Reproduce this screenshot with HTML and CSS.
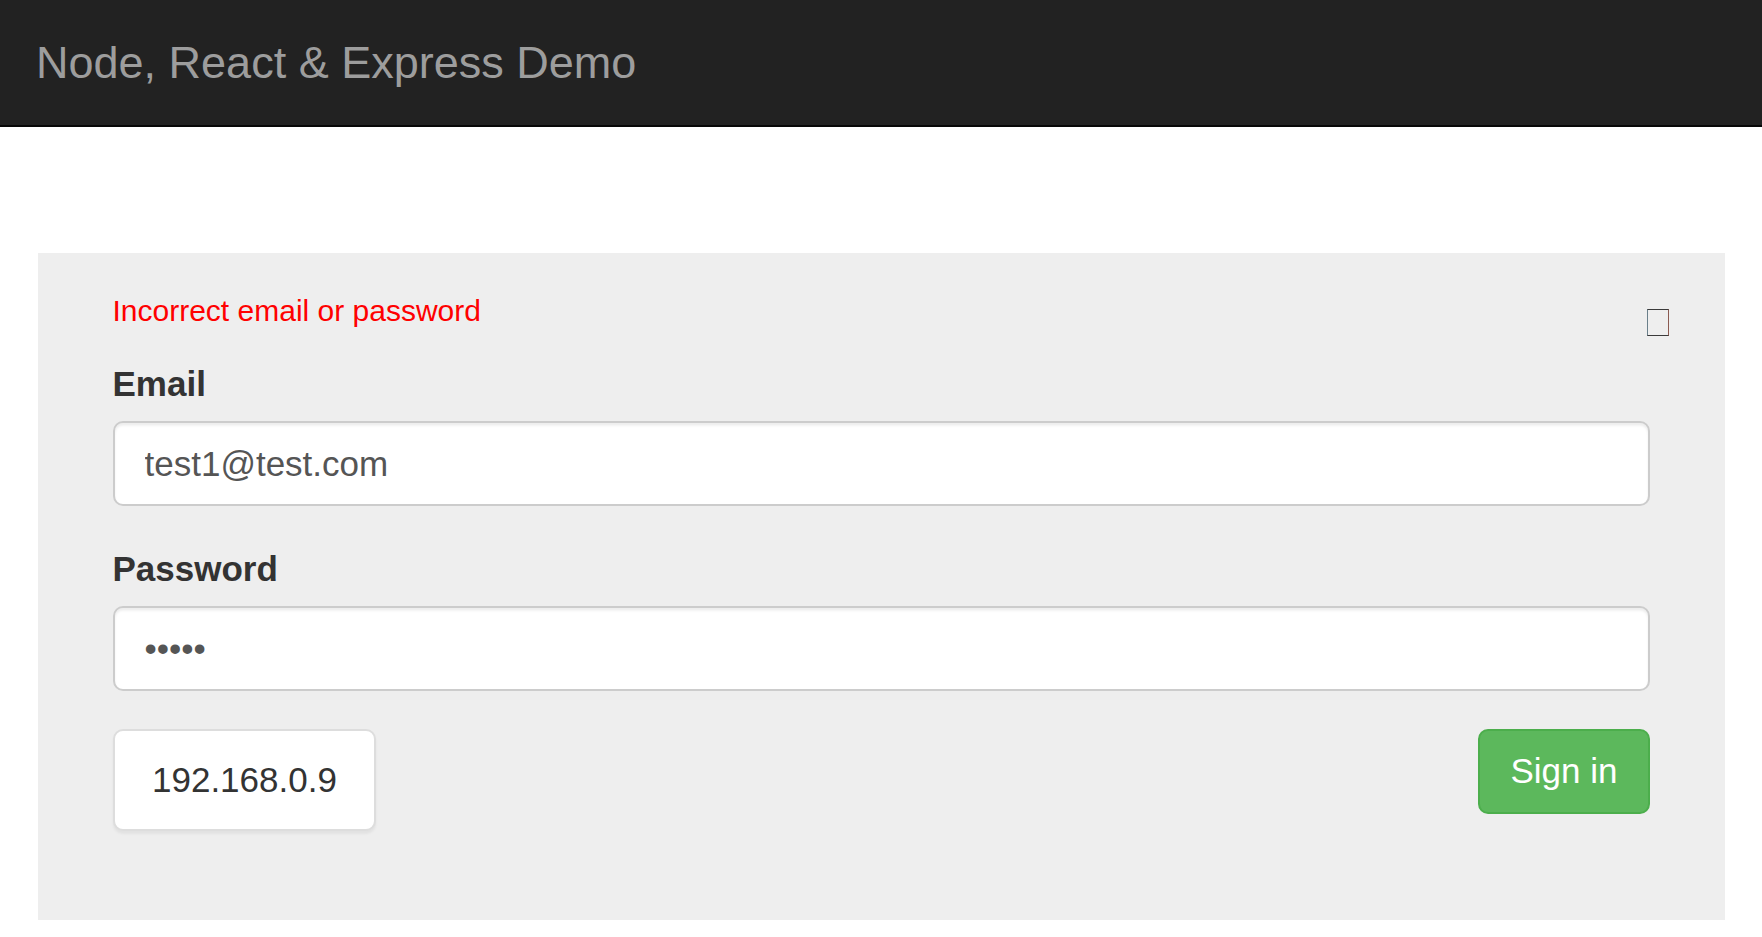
FILE: index.html
```html
<!DOCTYPE html>
<html lang="en">
<head>
<meta charset="utf-8">
<title>Node, React &amp; Express Demo</title>
<link rel="stylesheet" href="styles.css">
</head>
<body>
<header class="navbar">
  <span class="brand">Node, React &amp; Express Demo</span>
</header>
<main class="container">
  <section class="jumbotron">
    <div class="error-row">
      <div class="error">Incorrect email or password</div>
      <span class="glyph-missing"></span>
    </div>
    <form class="login-form">
      <div class="form-group">
        <label for="email">Email</label>
        <input id="email" class="form-control" type="email" value="test1@test.com">
      </div>
      <div class="form-group">
        <label for="password">Password</label>
        <input id="password" class="form-control" type="password" value="12345">
      </div>
      <div class="form-footer">
        <div class="ip-box">192.168.0.9</div>
        <button type="button" class="btn-success">Sign in</button>
      </div>
    </form>
  </section>
</main>
</body>
</html>
```
FILE: styles.css
```css
* { box-sizing: border-box; }
html, body { margin: 0; padding: 0; }
body {
  font-family: "Liberation Sans", Arial, Helvetica, sans-serif;
  font-size: 35px;
  line-height: 50px;
  color: #333;
  background: #fff;
}
.navbar {
  height: 127px;
  background: #222;
  border-bottom: 2.5px solid #080808;
}
.brand {
  display: block;
  padding: 37.5px 36px;
  font-size: 45px;
  line-height: 50px;
  color: #9d9d9d;
}
.container {
  margin-top: 126px;
  padding: 0 37.5px;
}
.jumbotron {
  background: #eee;
  padding: 36px 75px 89.5px;
}
.error-row {
  display: flex;
  justify-content: space-between;
  align-items: flex-start;
  height: 43px;
  margin-bottom: 26.5px;
}
.error {
  color: #f00;
  font-size: 30px;
  line-height: 43px;
}
.glyph-missing {
  display: block;
  width: 22px;
  height: 27px;
  margin-top: 20px;
  margin-right: -19px;
  border: 1px solid #3a3a3a;
  border-left-color: #6a7f8a;
  border-right-color: #8a5a50;
}
.form-group { margin-bottom: 37.5px; }
.form-group label {
  display: block;
  font-weight: bold;
  margin-bottom: 12.5px;
  line-height: 50px;
}
.form-control {
  display: block;
  width: 100%;
  height: 85px;
  padding: 15px 30px;
  font-family: inherit;
  font-size: 35px;
  line-height: 50px;
  color: #555;
  background: #fff;
  border: 2.5px solid #ccc;
  border-radius: 10px;
  box-shadow: inset 0 2.5px 2.5px rgba(0,0,0,.075);
  outline: none;
}
.form-footer {
  display: flex;
  justify-content: space-between;
  align-items: flex-start;
}
.ip-box {
  display: flex;
  align-items: center;
  height: 102px;
  padding: 0 37.5px;
  background: #fff;
  border: 2.5px solid #ddd;
  border-radius: 10px;
  box-shadow: 0 2.5px 2.5px rgba(0,0,0,.05);
  color: #333;
}
.btn-success {
  height: 85px;
  padding: 0 30px;
  font-family: inherit;
  font-size: 35px;
  line-height: 50px;
  color: #fff;
  background: #5cb85c;
  border: 2.5px solid #4cae4c;
  border-radius: 10px;
  cursor: pointer;
}
```
